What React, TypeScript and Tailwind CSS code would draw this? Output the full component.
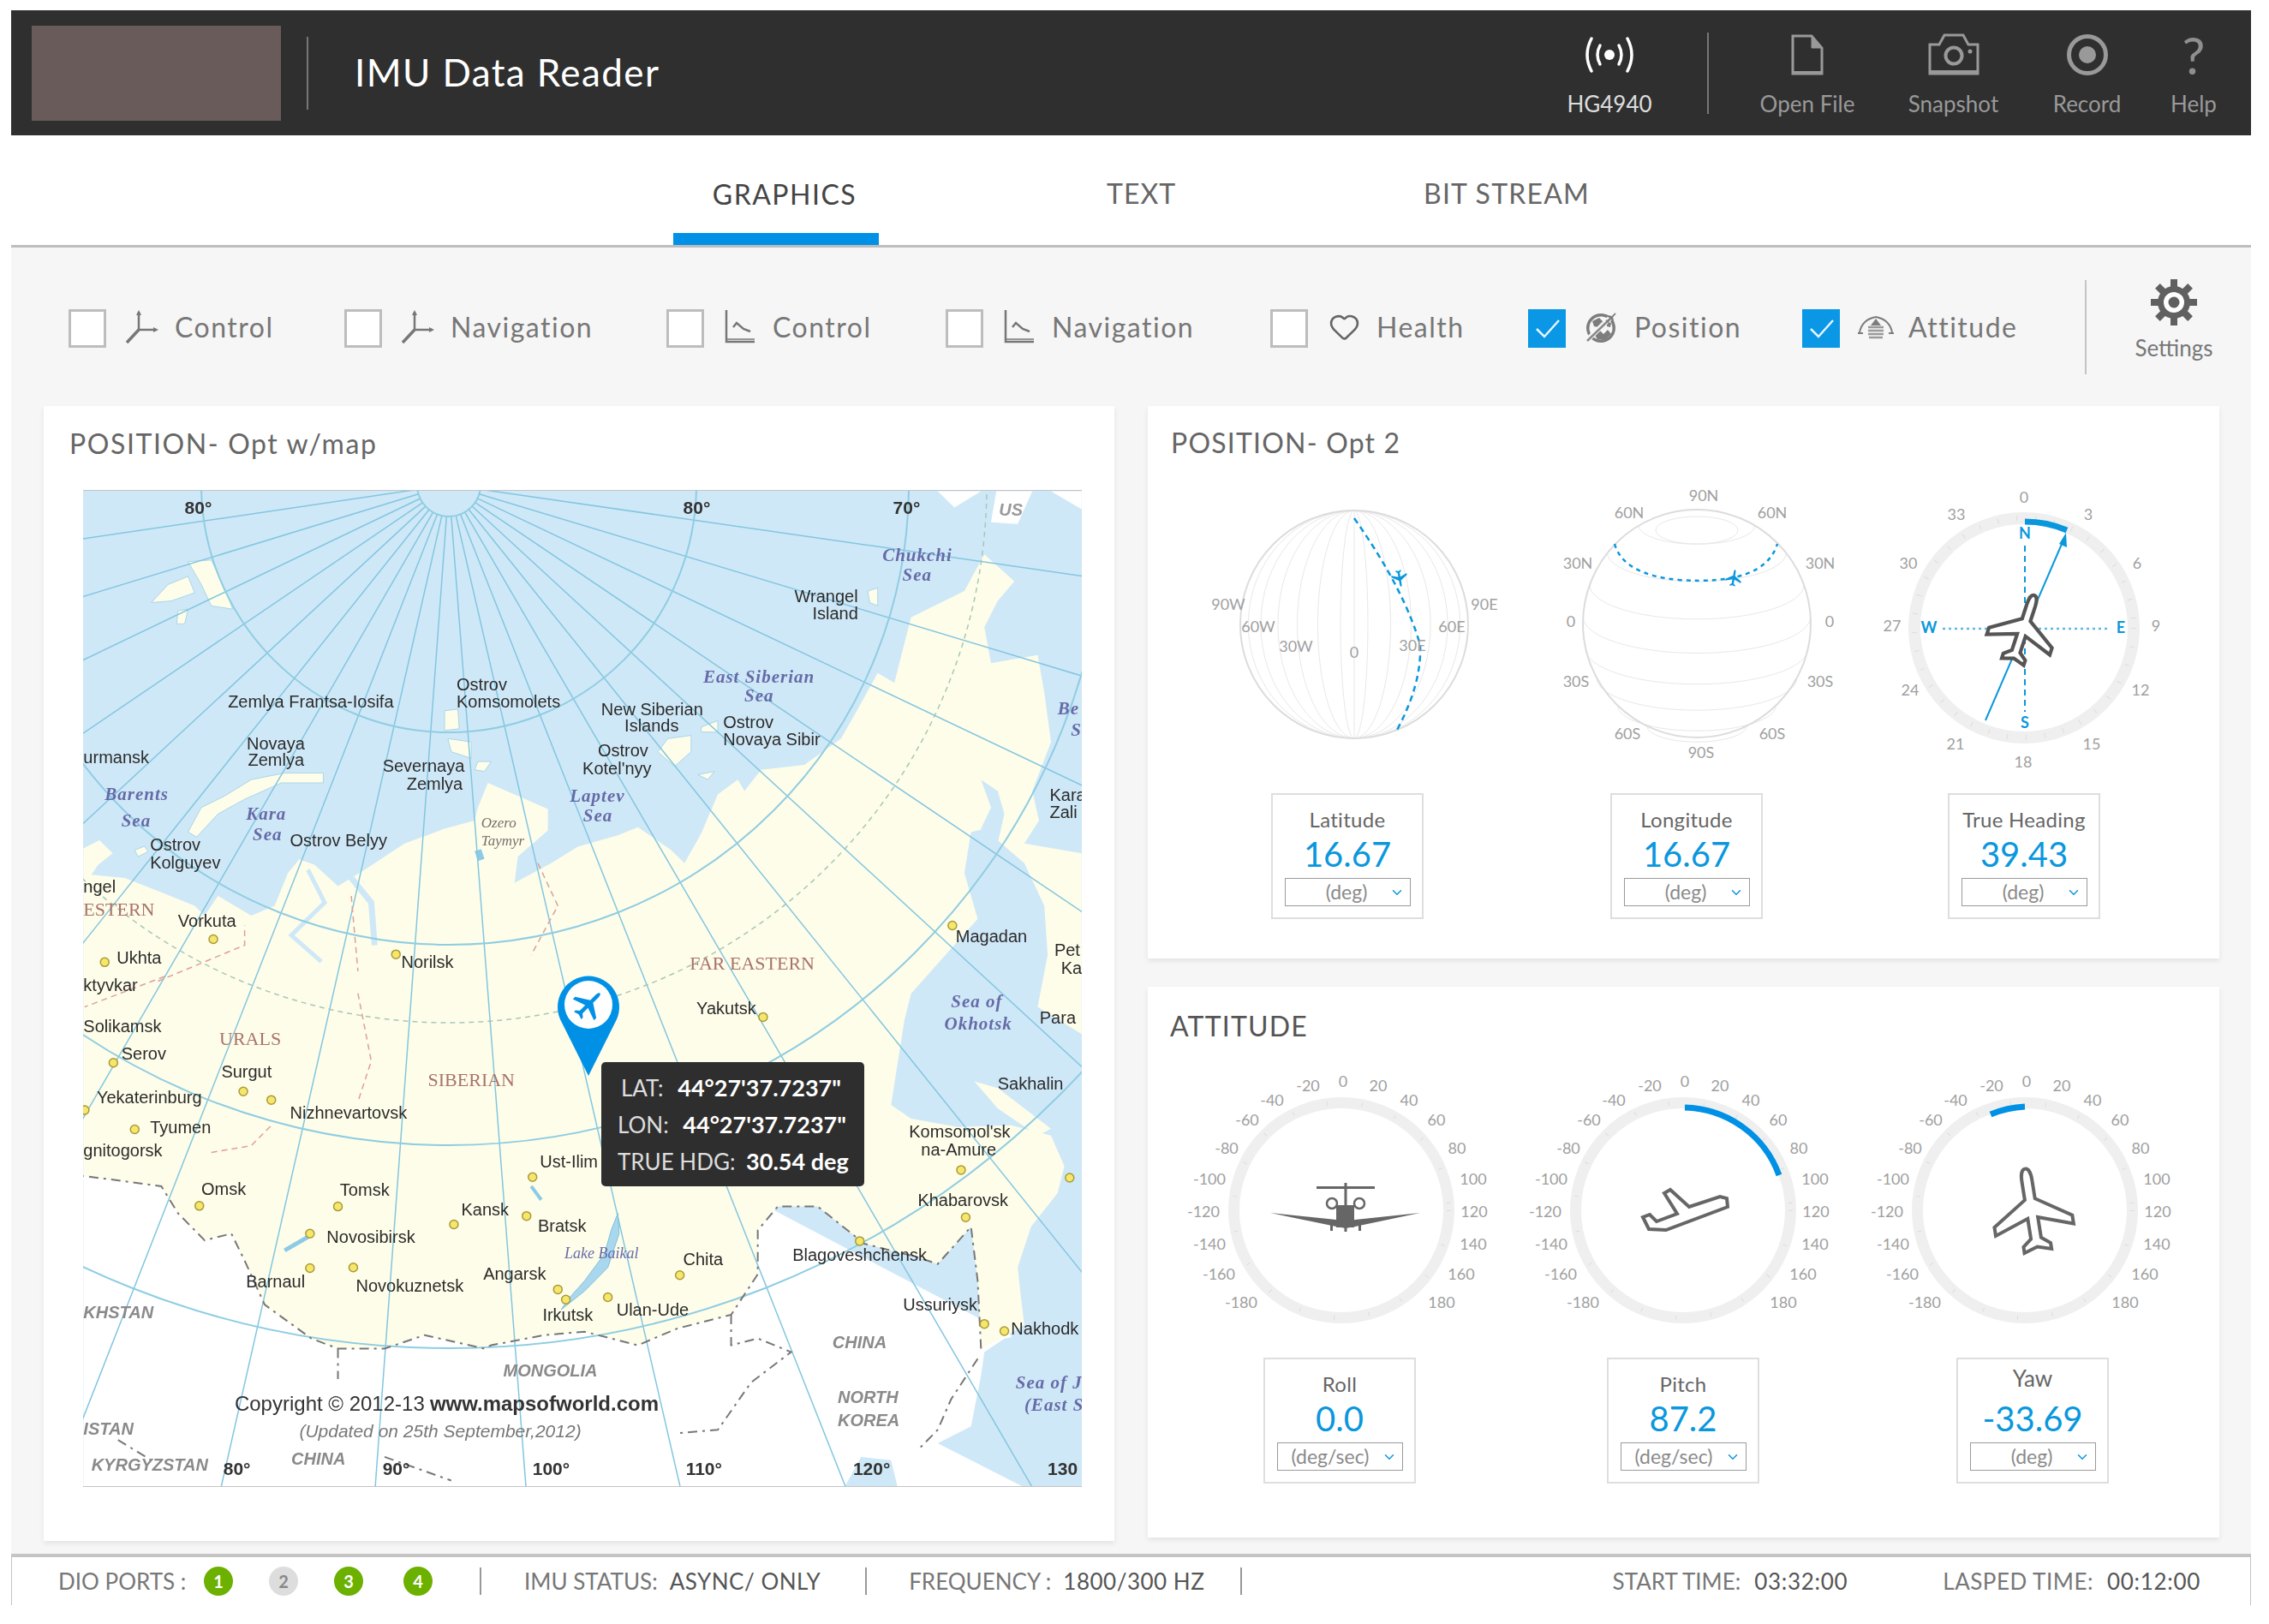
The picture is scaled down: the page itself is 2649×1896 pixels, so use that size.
import { ChevronDown, Heart } from 'lucide-react'
import type { ReactNode } from 'react'

// map reference points were read off two crops, so each set has its own scale
type Pt = [number, number]
type Label = [string, number, number]
const north = ([x, y]: Pt): Pt => [60 + x * 0.778, 560 + y * 0.3827]
const south = ([x, y]: Pt): Pt => [60 + x * 0.778, 1140 + y * 0.395]
const pts = (list: Pt[]) => list.map(([x, y]) => `${x},${y}`).join(' ')

const LAND: Pt[] = [
  ...([
    [48, 1125], [72, 1100], [92, 1140], [70, 1175], [60, 1205], [110, 1215], [160, 1255], [215, 1300], [230, 1330],
    [250, 1270], [300, 1330], [335, 1300], [355, 1200], [372, 1158], [395, 1175], [430, 1240], [470, 1190], [530, 1110],
    [590, 1065], [635, 1040], [640, 1000], [655, 925], [700, 965], [745, 1005], [745, 1070], [700, 1150], [695, 1230],
    [750, 1170], [790, 1120], [850, 1085], [880, 1060], [930, 1130], [950, 1170], [975, 1080], [1000, 960], [1030, 915],
    [1040, 950], [1065, 885], [1130, 870], [1185, 790], [1210, 700], [1240, 590], [1265, 620], [1290, 420], [1370, 340],
    [1400, 228], [1445, 310], [1420, 370], [1400, 450], [1410, 560], [1480, 535], [1490, 650], [1500, 800], [1472, 950],
    [1482, 1040], [1460, 1110], [1546, 1140], [1546, 1568],
  ] as Pt[]).map(north),
  ...([[1546, 170], [1480, 90]] as Pt[]).map(south),
  ...([
    [1495, 1450], [1490, 1300], [1460, 1170], [1400, 1065], [1380, 1075], [1370, 1200], [1390, 1340], [1290, 1568],
  ] as Pt[]).map(north),
  ...([
    [1280, 130], [1260, 380], [1290, 420], [1360, 445], [1440, 440], [1500, 470], [1520, 560], [1510, 640], [1470, 740],
    [1450, 860], [1455, 950], [1460, 1030], [1430, 1065], [1395, 1100], [1390, 900], [1380, 740], [1330, 850], [1300, 830],
    [1220, 790], [1150, 680], [1090, 680], [1060, 750], [1060, 880], [1020, 1000], [940, 1040], [880, 1090], [800, 1050],
    [740, 1060], [660, 1090], [650, 1100], [560, 1060], [500, 1100], [430, 1100], [390, 1070], [320, 970], [290, 840],
    [270, 760], [230, 780], [190, 700], [165, 620], [90, 600], [48, 590],
  ] as Pt[]).map(south),
]

const BORDER: Pt[] = ([
  [1395, 1100], [1390, 900], [1380, 740], [1330, 850], [1300, 830], [1220, 790], [1150, 680], [1090, 680], [1060, 750],
  [1060, 880], [1020, 1000], [940, 1040], [880, 1090], [800, 1050], [740, 1060], [660, 1090], [650, 1100], [560, 1060],
  [500, 1100], [430, 1100], [390, 1070], [320, 970], [290, 840], [270, 760], [230, 780], [190, 700], [165, 620], [90, 600], [48, 590],
] as Pt[]).map(south)

const ISLANDS: Pt[][] = ([
  [[150, 375], [175, 320], [205, 295], [215, 345], [180, 370]],
  [[205, 250], [240, 245], [262, 340], [272, 395], [240, 385], [225, 320]],
  [[190, 400], [205, 395], [200, 440], [188, 440]],
  [[205, 1075], [225, 1000], [260, 965], [300, 915], [350, 895], [408, 895], [408, 925], [345, 925], [290, 975], [250, 1020], [218, 1090]],
  [[590, 705], [610, 700], [612, 760], [590, 765]],
  [[595, 790], [630, 800], [630, 850], [600, 830]],
  [[640, 860], [660, 860], [650, 890], [635, 885]],
  [[925, 790], [960, 780], [960, 830], [935, 875], [910, 830]],
  [[975, 755], [1000, 735], [1000, 770], [975, 770]],
  [[970, 900], [995, 890], [985, 915]],
  [[1225, 340], [1240, 330], [1240, 385], [1228, 375]],
  [[125, 1130], [140, 1118], [145, 1135], [130, 1150]],
] as Pt[][]).map((s) => s.map(north))

const ALASKA: Pt[][] = ([
  [[1330, 35], [1355, 85], [1395, 35]],
  [[1418, 35], [1410, 130], [1450, 135], [1472, 35]],
  [[1500, 35], [1546, 90], [1546, 35]],
] as Pt[][]).map((s) => s.map(north))

const CITY_N: Pt[] = [[243, 1402], [80, 1472], [517, 1448], [1352, 1360]]
const CITY_S: Pt[] = [
  [1068, 120], [93, 255], [288, 340], [330, 365], [50, 395], [125, 452], [222, 678], [430, 680], [722, 593], [604, 733],
  [713, 708], [388, 760], [388, 862], [453, 860], [760, 925], [772, 955], [835, 948], [943, 883], [1213, 782], [1365, 572],
  [1372, 712], [1400, 1027], [1430, 1048], [1528, 595],
]

const NAMES_N: Label[] = [
  ['Zemlya Frantsa-Iosifa', 265, 680], ['Ostrov', 608, 630], ['Komsomolets', 608, 682], ['New Siberian', 825, 705],
  ['Islands', 860, 755], ['Ostrov', 1008, 745], ['Novaya Sibir', 1008, 795], ['Novaya', 293, 808], ['Zemlya', 295, 860],
  ['urmansk', 48, 852], ['Severnaya', 497, 878], ['Zemlya', 533, 932], ['Ostrov', 820, 830], ["Kotel'nyy", 797, 885],
  ['Ostrov Belyy', 358, 1105], ['Ostrov', 148, 1118], ['Kolguyev', 148, 1172], ['ngel', 48, 1245], ['Vorkuta', 190, 1350],
  ['Ukhta', 98, 1462], ['ktyvkar', 48, 1545], ['Norilsk', 525, 1475], ['Magadan', 1357, 1398], ['Pet', 1505, 1440],
  ['Ka', 1515, 1495], ['Wrangel', 1115, 360], ['Island', 1142, 412], ['Kara', 1498, 965], ['Zali', 1498, 1018],
]
const NAMES_S: Label[] = [
  ['Solikamsk', 48, 152], ['Serov', 105, 232], ['Surgut', 255, 285], ['Yekaterinburg', 68, 362], ['Nizhnevartovsk', 358, 408],
  ['Tyumen', 148, 450], ['gnitogorsk', 48, 518], ['Omsk', 225, 632], ['Tomsk', 433, 635], ['Ust-Ilim', 733, 552],
  ['Kansk', 615, 692], ['Bratsk', 730, 742], ['Novosibirsk', 413, 775], ['Chita', 948, 840], ['Barnaul', 292, 905],
  ['Novokuznetsk', 457, 918], ['Angarsk', 648, 882], ['Irkutsk', 737, 1005], ['Ulan-Ude', 848, 988],
  ['Blagoveshchensk', 1112, 828], ['Ussuriysk', 1278, 975], ['Nakhodk', 1440, 1045], ['Yakutsk', 968, 97], ['Para', 1483, 125],
  ['Sakhalin', 1420, 322], ["Komsomol'sk", 1287, 463], ['na-Amure', 1305, 517], ['Khabarovsk', 1300, 665],
]
const SEAS_N: Label[] = [
  ['Chukchi', 1247, 235], ['Sea', 1277, 297], ['East Siberian', 978, 607], ['Sea', 1040, 665], ['Barents', 80, 965],
  ['Sea', 105, 1045], ['Kara', 292, 1025], ['Sea', 302, 1087], ['Laptev', 778, 970], ['Sea', 798, 1030], ['Be', 1510, 703], ['S', 1530, 770],
]
const SEAS_S: Label[] = [['Sea of', 1350, 80], ['Okhotsk', 1340, 145], ['Sea of Ja', 1447, 1205], ['(East S', 1460, 1272]]
const REGIONS_N: Label[] = [['ESTERN', 48, 1318], ['FAR EASTERN', 958, 1482]]
const REGIONS_S: Label[] = [['URALS', 252, 190], ['SIBERIAN', 565, 312]]
const COUNTRIES: Label[] = [
  ['KHSTAN', 48, 998], ['CHINA', 1172, 1085], ['MONGOLIA', 678, 1170], ['NORTH', 1180, 1247], ['KOREA', 1180, 1315],
  ['ISTAN', 48, 1340], ['KYRGYZSTAN', 60, 1447], ['CHINA', 360, 1430],
]
const DEGREES_N: Label[] = [['80°', 200, 90], ['80°', 948, 90], ['70°', 1263, 90]]
const DEGREES_S: Label[] = [['80°', 258, 1460], ['90°', 497, 1460], ['100°', 722, 1460], ['110°', 952, 1460], ['120°', 1203, 1460], ['130', 1495, 1460]]

const PLANE =
  'M0 -50C4 -50 6 -44 6 -36L6 -14L46 12L46 22L6 8L6 32L16 40L16 47L0 42L-16 47L-16 40L-6 32L-6 8L-46 22L-46 12L-6 -14L-6 -36C-6 -44 -4 -50 0 -50Z'

function MapText({ items, at, className }: { items: Label[]; at: (p: Pt) => Pt; className: string }) {
  return (
    <g className={className}>
      {items.map(([t, x, y], i) => {
        const [px, py] = at([x, y])
        return (
          <text key={i} x={px} y={py} dominantBaseline="middle">
            {t}
          </text>
        )
      })}
    </g>
  )
}

function RussiaMap() {
  const fan = Array.from({ length: 21 }, (_, k) => ((-4.2 + 8.6 * (k - 10)) * Math.PI) / 180)
  return (
    <svg viewBox="97 573 1166 1164" className="block w-[1166px] h-[1164px] blur-[0.5px]">
      <rect x="97" y="573" width="1166" height="1164" fill="#cfe8f7" />
      <polygon points={pts(([[48, 590], [48, 1510], [1470, 1510], [1440, 1060], [900, 500]] as Pt[]).map(south))} fill="#ffffff" />
      <polygon points={pts(([[1430, 1070], [1400, 1110], [1395, 1180], [1380, 1330], [1330, 1380], [1460, 1510], [1546, 1510], [1546, 1030]] as Pt[]).map(south))} fill="#cfe8f7" />
      <polygon points={pts(([[1190, 1510], [1215, 1420], [1260, 1430], [1270, 1510]] as Pt[]).map(south))} fill="#cfe8f7" />
      <polygon points={pts(LAND)} fill="#fefde9" />
      <polygon points={pts(([[1385, 310], [1420, 330], [1460, 390], [1500, 450], [1480, 470], [1420, 390]] as Pt[]).map(south))} fill="#fefde9" />
      {ISLANDS.map((s, i) => (
        <polygon key={i} points={pts(s)} fill="#fefde9" stroke="#a9d6ea" strokeWidth="1" />
      ))}
      {ALASKA.map((s, i) => (
        <polygon key={i} points={pts(s)} fill="#ffffff" />
      ))}
      {/* inlets and lakes */}
      <polygon points={pts(([[1395, 915], [1420, 950], [1430, 1020], [1420, 1110], [1395, 1065], [1410, 1000]] as Pt[]).map(north))} fill="#cfe8f7" />
      <polyline points={pts(([[440, 1190], [480, 1290], [485, 1420]] as Pt[]).map(north))} fill="none" stroke="#cfe8f7" strokeWidth="7" />
      <polyline points={pts(([[385, 1190], [410, 1290], [360, 1390], [405, 1470]] as Pt[]).map(north))} fill="none" stroke="#cfe8f7" strokeWidth="5" />
      <polyline points={pts(([[640, 1130], [645, 1160]] as Pt[]).map(north))} fill="none" stroke="#8ccbe8" strokeWidth="8" />
      <polygon points={pts(([[850, 700], [852, 760], [835, 860], [800, 930], [765, 985], [775, 955], [800, 900], [830, 820], [840, 750]] as Pt[]).map(south))} fill="#a9d8ee" stroke="#7fbfdc" strokeWidth="1" />
      <polyline points={pts(([[350, 810], [385, 770]] as Pt[]).map(south))} fill="none" stroke="#8ccbe8" strokeWidth="5" />
      <polyline points={pts(([[720, 620], [735, 660]] as Pt[]).map(south))} fill="none" stroke="#8ccbe8" strokeWidth="4" />
      {/* graticule around the pole */}
      {fan.map((a, i) => (
        <line key={i} x1={524 + 37 * Math.sin(a)} y1={566 + 37 * Math.cos(a)} x2={524 + 2000 * Math.sin(a)} y2={566 + 2000 * Math.cos(a)} stroke="#82c6e0" strokeWidth="1.5" />
      ))}
      {[37, 289, 537, 771, 1008].map((r) => (
        <circle key={r} cx="524" cy="566" r={r} fill="none" stroke="#8fcde2" strokeWidth="2" />
      ))}
      <circle cx="524" cy="566" r="628" fill="none" stroke="#a7c7b8" strokeWidth="1.5" strokeDasharray="6 5" />
      {/* borders */}
      <polyline points={pts(BORDER)} fill="none" stroke="#777777" strokeWidth="2" strokeDasharray="11 6 3 6" />
      {([
        [[430, 1100], [430, 1190]],
        [[1020, 1000], [1020, 1090], [1060, 1070], [1110, 1110], [1050, 1200], [1000, 1340], [940, 1350]],
        [[1390, 1130], [1350, 1250], [1330, 1340], [1300, 1400]],
        [[100, 1370], [150, 1430]],
        [[500, 1420], [600, 1490]],
      ] as Pt[][]).map((s, i) => (
        <polyline key={i} points={pts(s.map(south))} fill="none" stroke="#777777" strokeWidth="2" strokeDasharray="11 6 3 6" />
      ))}
      {([
        [[460, 50], [480, 250], [460, 370]],
        [[240, 520], [300, 500], [330, 440]],
        [[170, 0], [50, 90]],
      ] as Pt[][]).map((s, i) => (
        <polyline key={i} points={pts(s.map(south))} fill="none" stroke="#dd9f98" strokeWidth="1.5" strokeDasharray="7 5" />
      ))}
      {([
        [[450, 1270], [460, 1500]],
        [[730, 1170], [760, 1300], [720, 1450]],
        [[160, 1530], [290, 1420], [290, 1360]],
      ] as Pt[][]).map((s, i) => (
        <polyline key={i} points={pts(s.map(north))} fill="none" stroke="#dd9f98" strokeWidth="1.5" strokeDasharray="7 5" />
      ))}
      {[...CITY_N.map(north), ...CITY_S.map(south)].map(([x, y], i) => (
        <circle key={i} cx={x} cy={y} r="5" fill="#f6e66b" stroke="#a89a3a" strokeWidth="1.5" />
      ))}
      <MapText items={NAMES_N} at={north} className="font-['Liberation_Sans',sans-serif] text-[20px] fill-[#2b2b2b]" />
      <MapText items={NAMES_S} at={south} className="font-['Liberation_Sans',sans-serif] text-[20px] fill-[#2b2b2b]" />
      <MapText items={SEAS_N} at={north} className="font-['Liberation_Serif',serif] italic font-bold text-[21px] tracking-[1px] fill-[#666aa8]" />
      <MapText items={SEAS_S} at={south} className="font-['Liberation_Serif',serif] italic font-bold text-[21px] tracking-[1px] fill-[#666aa8]" />
      <MapText items={REGIONS_N} at={north} className="font-['Liberation_Serif',serif] text-[22px] fill-[#a9736a]" />
      <MapText items={REGIONS_S} at={south} className="font-['Liberation_Serif',serif] text-[22px] fill-[#a9736a]" />
      <MapText items={COUNTRIES} at={south} className="font-['Liberation_Sans',sans-serif] italic font-bold text-[20px] fill-[#8a8a8a]" />
      <MapText items={DEGREES_N} at={north} className="font-['Liberation_Sans',sans-serif] font-bold text-[21px] fill-[#333333]" />
      <MapText items={DEGREES_S} at={south} className="font-['Liberation_Sans',sans-serif] font-bold text-[21px] fill-[#333333]" />
      <MapText items={[['Ozero', 645, 1050], ['Taymyr', 645, 1105]]} at={north} className="font-['Liberation_Serif',serif] italic text-[17px] fill-[#77706a]" />
      <MapText items={[['US', 1422, 95]]} at={north} className="font-['Liberation_Sans',sans-serif] italic font-bold text-[20px] fill-[#999999]" />
      <MapText items={[['Lake Baikal', 770, 822]]} at={south} className="font-['Liberation_Serif',serif] italic text-[18px] fill-[#666aa8]" />
      <MapText items={[['Copyright © 2012-13', 275, 1268]]} at={south} className="font-['Liberation_Sans',sans-serif] text-[24px] fill-[#333333]" />
      <MapText items={[['www.mapsofworld.com', 568, 1268]]} at={south} className="font-['Liberation_Sans',sans-serif] font-bold text-[24px] fill-[#333333]" />
      <MapText items={[['(Updated on 25th September,2012)', 372, 1348]]} at={south} className="font-['Liberation_Sans',sans-serif] italic text-[21px] fill-[#777777]" />
      {/* location pin */}
      <path d="M687 1256L654 1190A36 36 0 1 1 720 1190Z" fill="#0091e6" />
      <circle cx="687" cy="1173" r="28" fill="#ffffff" />
      <path d={PLANE} fill="#0091e6" transform="translate(687 1173) rotate(45) scale(0.38)" />
    </svg>
  )
}

function Readout({ label, value, unit, pad = 'pt-[16px]', labelClass = 'text-[24px] tracking-[0.3px] text-[#666]', left = false }: { label: string; value: string; unit: string; pad?: string; labelClass?: string; left?: boolean }) {
  return (
    <div className={`w-[178px] h-[147px] shrink-0 border-2 border-[#dedede] flex flex-col items-center ${pad}`}>
      <div className={`h-[26px] leading-[26px] whitespace-nowrap ${labelClass}`}>{label}</div>
      <div className="mt-[7px] h-[40px] leading-[40px] text-[40px] text-[#0a97dd] whitespace-nowrap">{value}</div>
      <div className="mt-[8px] w-[147px] h-[33px] border border-[#9a9a9a] flex items-center text-[23px] text-[#8a8a8a]">
        <span className={left ? 'flex-1 text-center pl-[2px] whitespace-nowrap' : 'flex-1 text-center pl-[22px]'}>{unit}</span>
        <ChevronDown className="w-[18px] h-[18px] mr-[6px] text-[#0a97dd]" strokeWidth={2} />
      </div>
    </div>
  )
}

function ScaleText({ items }: { items: [string, number, number][] }) {
  return (
    <g className="text-[18px] fill-[#a0a0a0]">
      {items.map(([t, x, y], i) => (
        <text key={i} x={x} y={y} textAnchor="middle" dominantBaseline="middle">
          {t}
        </text>
      ))}
    </g>
  )
}

function LatitudeGlobe() {
  return (
    <svg viewBox="1420 570 330 335" className="w-[330px] h-[335px] shrink-0 overflow-visible">
      {[0.12, 0.32, 0.5, 0.67, 0.82, 0.93].map((k) => (
        <ellipse key={k} cx="1581" cy="730" rx={133 * k} ry="133" fill="none" stroke="#e8e8e8" strokeWidth="1" />
      ))}
      <line x1="1581" y1="597" x2="1581" y2="863" stroke="#e8e8e8" />
      <circle cx="1581" cy="730" r="133" fill="none" stroke="#dcdcdc" strokeWidth="2" />
      <path d="M1581 606Q1640 690 1658 754Q1660 800 1630 855" fill="none" stroke="#0a97dd" strokeWidth="2.5" strokeDasharray="7 5" />
      <path d={PLANE} fill="#0a97dd" transform="translate(1634 676) rotate(170) scale(0.2)" />
      <ScaleText items={[['90W', 1434, 708], ['60W', 1469, 734], ['30W', 1513, 757], ['0', 1581, 764], ['30E', 1649, 756], ['60E', 1695, 734], ['90E', 1733, 708]]} />
    </svg>
  )
}

function LongitudeGlobe() {
  const bands = [0.86, 0.62, 0.34, 0.06, -0.22, -0.48, -0.72, -0.9]
  return (
    <svg viewBox="1820 570 330 335" className="w-[330px] h-[335px] shrink-0 overflow-visible">
      <ellipse cx="1981" cy="620" rx="48" ry="16" fill="none" stroke="#e8e8e8" />
      {bands.map((k) => {
        const rx = 133 * Math.sqrt(1 - k * k)
        const y = 729 - 133 * k
        return <path key={k} d={`M${1981 - rx} ${y}A${rx} ${rx * 0.32} 0 0 0 ${1981 + rx} ${y}`} fill="none" stroke="#e8e8e8" />
      })}
      <circle cx="1981" cy="729" r="133" fill="none" stroke="#dcdcdc" strokeWidth="2" />
      <path d="M1885 636Q1895 672 1960 678Q2060 685 2075 636" fill="none" stroke="#0a97dd" strokeWidth="2.5" strokeDasharray="5 5" />
      <path d={PLANE} fill="#0a97dd" transform="translate(2024 676) rotate(10) scale(0.2)" />
      <ScaleText items={[['90N', 1989, 581], ['60N', 1902, 601], ['60N', 2069, 601], ['30N', 1842, 660], ['30N', 2125, 660], ['0', 1834, 728], ['0', 2136, 728], ['30S', 1840, 798], ['30S', 2125, 798], ['60S', 1900, 859], ['60S', 2069, 859], ['90S', 1986, 881]]} />
    </svg>
  )
}

function Compass() {
  return (
    <svg viewBox="2200 570 330 335" className="w-[330px] h-[335px] shrink-0 overflow-visible">
      <circle cx="2363" cy="734" r="128" fill="none" stroke="#efefef" strokeWidth="14" />
      <circle cx="2363" cy="734" r="128" fill="none" stroke="#dddddd" strokeWidth="6" strokeDasharray="1 21" />
      <path d="M2364 610A124 124 0 0 1 2413 620" fill="none" stroke="#0a97dd" strokeWidth="7" />
      <line x1="2364" y1="638" x2="2364" y2="832" stroke="#0a97dd" strokeWidth="2" strokeDasharray="7 5" />
      <line x1="2268" y1="735" x2="2464" y2="735" stroke="#5fb8e4" strokeWidth="2.5" strokeDasharray="3 4" />
      <line x1="2318" y1="842" x2="2411" y2="627" stroke="#0a97dd" strokeWidth="2" />
      <path d="M2412 623L2413 640L2404 636Z" fill="#0a97dd" />
      <path d={PLANE} fill="#ffffff" stroke="#555555" strokeWidth="5" transform="translate(2362 736) rotate(18) scale(0.84)" />
      <ScaleText items={[['0', 2363, 583], ['3', 2438, 603], ['6', 2495, 660], ['9', 2517, 733], ['12', 2499, 808], ['15', 2442, 871], ['18', 2362, 892], ['21', 2283, 871], ['24', 2230, 808], ['27', 2209, 733], ['30', 2228, 660], ['33', 2284, 603]]} />
      <g className="text-[18px] font-bold fill-[#0a97dd]">
        <text x="2364" y="625" textAnchor="middle" dominantBaseline="middle">N</text>
        <text x="2364" y="846" textAnchor="middle" dominantBaseline="middle">S</text>
        <text x="2252" y="735" textAnchor="middle" dominantBaseline="middle">W</text>
        <text x="2476" y="735" textAnchor="middle" dominantBaseline="middle">E</text>
      </g>
    </svg>
  )
}

// x offsets are from the zero mark, y from the ring centre
const GAUGE_MARKS: [string, number, number][] = [
  ['0', 0, -149], ['20', 41, -144], ['40', 77, -127], ['60', 109, -104], ['80', 133, -71], ['100', 152, -35], ['120', 153, 3],
  ['140', 152, 41], ['160', 138, 76], ['180', 115, 109], ['-20', -41, -144], ['-40', -83, -127], ['-60', -112, -104], ['-80', -136, -71],
  ['-100', -156, -35], ['-120', -163, 3], ['-140', -156, 41], ['-160', -145, 76], ['-180', -119, 109],
]

function Gauge({ cx, left, children }: { cx: number; left: number; children: ReactNode }) {
  return (
    <svg viewBox={`${left} 1250 340 320`} className="w-[340px] h-[320px] shrink-0 overflow-visible">
      <circle cx={cx} cy="1413" r="125.5" fill="none" stroke="#efefef" strokeWidth="13" />
      <circle cx={cx} cy="1413" r="125.5" fill="none" stroke="#dddddd" strokeWidth="5" strokeDasharray="1 40" />
      <ScaleText items={GAUGE_MARKS.map(([t, x, y]) => [t, cx + 2 + x, 1413 + y])} />
      {children}
    </svg>
  )
}

function RollPlane() {
  return (
    <g fill="#666666">
      <path d="M1483 1416L1560 1424L1571 1428L1582 1424L1658 1416L1582 1432L1571 1434L1560 1432Z" />
      <rect x="1560" y="1407" width="21" height="26" />
      <rect x="1569.5" y="1381" width="3" height="57" />
      <path d="M1537 1385L1605 1385L1605 1388L1537 1388Z" />
      <circle cx="1555" cy="1405" r="6" fill="none" stroke="#666666" strokeWidth="2.5" />
      <circle cx="1587" cy="1405" r="6" fill="none" stroke="#666666" strokeWidth="2.5" />
      <rect x="1553" y="1426" width="3" height="11" />
      <rect x="1586" y="1426" width="3" height="11" />
    </g>
  )
}

function AxisIcon() {
  return (
    <svg viewBox="0 0 38 40" className="w-[38px] h-[40px]" fill="none" stroke="#777777" strokeWidth="2.5">
      <path d="M15 2V23H35" />
      <path d="M15 23L1 38" strokeWidth="3.5" />
      <path d="M15 0L12 6H18ZM38 23L32 20V26Z" fill="#777777" stroke="none" />
    </svg>
  )
}

function ChartIcon() {
  return (
    <svg viewBox="0 0 36 42" className="w-[36px] h-[42px]" fill="none" stroke="#777777" strokeWidth="2.5">
      <path d="M2 1V38H35" />
      <path d="M2 35H35" strokeWidth="1.5" />
      <path d="M10 21L14 16L22 23L30 26" />
    </svg>
  )
}

function PositionIcon() {
  return (
    <svg viewBox="0 0 40 38" className="w-[40px] h-[38px]">
      <circle cx="19" cy="20" r="17" fill="#7d7d7d" />
      <circle cx="19" cy="20" r="13.5" fill="#f6f6f6" />
      <path d="M9 12L17 8L22 13L16 19L11 18ZM11 27L18 23L22 27L27 22L31 27L24 34L15 33ZM26 13L31 14L30 19L26 18Z" fill="#7d7d7d" />
      <path d="M1 36L31 7" stroke="#f6f6f6" strokeWidth="6" />
      <path d="M3 35L30 9" stroke="#8a8a8a" strokeWidth="2.5" />
      <path d={PLANE} fill="#7d7d7d" transform="translate(31 8) rotate(45) scale(0.15)" />
    </svg>
  )
}

function AttitudeIcon() {
  return (
    <svg viewBox="0 0 42 32" className="w-[42px] h-[32px]" fill="none" stroke="#7d7d7d" strokeWidth="2">
      <path d="M2 22Q5 7 21 4Q37 7 40 22" />
      <path d="M0 23H6M36 23H42" />
      <path d="M21 6L15 14H27Z" fill="#7d7d7d" stroke="none" />
      <path d="M12 16H30M12 20H30M12 24H30M13 28H29" strokeWidth="2.5" stroke="#9a9a9a" />
    </svg>
  )
}

function Gear() {
  return (
    <svg viewBox="-28 -28 56 56" className="w-[56px] h-[56px]">
      {[0, 45, 90, 135, 180, 225, 270, 315].map((a) => (
        <rect key={a} x="-4" y="-27" width="8" height="12" fill="#606060" transform={`rotate(${a})`} />
      ))}
      <circle r="19" fill="#606060" />
      <circle r="12" fill="#ffffff" />
      <circle r="6.5" fill="#606060" />
    </svg>
  )
}

const TOOLS = [
  { w: 'w-[322px]', icon: <AxisIcon />, label: 'Control', on: false },
  { w: 'w-[376px]', icon: <AxisIcon />, label: 'Navigation', on: false },
  { w: 'w-[326px]', icon: <ChartIcon />, label: 'Control', on: false },
  { w: 'w-[379px]', icon: <ChartIcon />, label: 'Navigation', on: false },
  { w: 'w-[301px]', icon: <Heart className="w-[37px] h-[37px] text-[#666]" strokeWidth={1.7} />, label: 'Health', on: false },
  { w: 'w-[320px]', icon: <PositionIcon />, label: 'Position', on: true },
  { w: 'w-[330px]', icon: <AttitudeIcon />, label: 'Attitude', on: true },
]

function Tool({ w, icon, label, on }: { w: string; icon: ReactNode; label: string; on: boolean }) {
  return (
    <div className={`${w} flex items-center shrink-0`}>
      {on ? (
        <svg viewBox="0 0 44 45" className="w-[44px] h-[45px] mt-[4px] bg-[#0a97e6]" fill="none" stroke="#e8f5fd" strokeWidth="2.5">
          <path d="M10 23L19 32L36 13" />
        </svg>
      ) : (
        <div className="w-[44px] h-[45px] mt-[4px] bg-white border-[3px] border-[#bdbdbd]" />
      )}
      <div className="w-[66px] flex justify-center pl-[18px]">{icon}</div>
      <span className="ml-[14px] text-[32px] text-[#777] tracking-[1.5px]">{label}</span>
    </div>
  )
}

function HeaderAction({ w, label, light, children }: { w: string; label: string; light?: boolean; children: ReactNode }) {
  return (
    <div className={`${w} shrink-0 flex flex-col items-center`}>
      <div className="h-[62px] flex items-center justify-center">{children}</div>
      <span className={`mt-[10px] leading-[32px] text-[26px] whitespace-nowrap ${light ? 'text-[#dddddd]' : 'text-[#999999]'}`}>{label}</span>
    </div>
  )
}

function Port({ n, on }: { n: number; on: boolean }) {
  return (
    <div className={`w-[34px] h-[34px] rounded-full flex items-center justify-center text-[20px] font-bold ${on ? 'bg-[#6cb000] text-white' : 'bg-[#dddddd] text-[#888888]'}`}>
      {n}
    </div>
  )
}

export default function App() {
  return (
    <div className="w-[2649px] h-[1896px] bg-white pt-[12px] pl-[13px] pr-[21px] font-['Lato',sans-serif] overflow-hidden">
      <header className="h-[146px] bg-[#2f2f2f] flex items-center pl-[24px] pr-[39px]">
        <div className="w-[291px] h-[111px] bg-[#685b5a]" />
        <div className="ml-[30px] w-[2px] h-[85px] bg-[#777777]" />
        <h1 className="ml-[54px] pb-[3px] text-[44px] text-white tracking-[1.4px]">IMU Data Reader</h1>
        <div className="ml-auto flex items-center">
          <HeaderAction w="w-[102px]" label="HG4940" light>
            <svg viewBox="0 0 60 42" className="w-[60px] h-[42px]" fill="none" stroke="#ffffff" strokeWidth="3.5" strokeLinecap="round">
              <circle cx="30" cy="21" r="6" fill="#ffffff" stroke="none" />
              <path d="M19 10Q13 21 19 32M41 10Q47 21 41 32" />
              <path d="M9 2Q-1 21 9 40M51 2Q61 21 51 40" />
            </svg>
          </HeaderAction>
          <div className="ml-[63px] w-[2px] h-[95px] bg-[#777777]" />
          <HeaderAction w="w-[114px] ml-[58px]" label="Open File">
            <svg viewBox="0 0 38 48" className="w-[38px] h-[48px]" fill="none" stroke="#999999" strokeWidth="3">
              <path d="M2 2H24L36 16V46H2Z" />
              <path d="M24 2V16H36Z" fill="#999999" strokeWidth="1" />
              <path d="M2 45H36" strokeWidth="4" />
            </svg>
          </HeaderAction>
          <HeaderAction w="w-[117px] ml-[55px]" label="Snapshot">
            <svg viewBox="0 0 60 50" className="w-[60px] h-[50px]" fill="none" stroke="#999999" strokeWidth="3">
              <path d="M2 13H13L19 2H41L47 13H58V47H2Z" />
              <path d="M2 45H58" strokeWidth="4" />
              <circle cx="30" cy="26" r="9.5" strokeWidth="4" />
              <circle cx="49" cy="21" r="2.5" fill="#999999" stroke="none" />
            </svg>
          </HeaderAction>
          <HeaderAction w="w-[83px] ml-[56px]" label="Record">
            <svg viewBox="0 0 48 48" className="w-[48px] h-[48px]" fill="none">
              <circle cx="24" cy="24" r="21.5" stroke="#999999" strokeWidth="5" />
              <circle cx="24" cy="24" r="10" fill="#999999" />
            </svg>
          </HeaderAction>
          <HeaderAction w="w-[56px] ml-[55px]" label="Help">
            <span className="text-[60px] leading-[60px] text-[#8f8f8f]">?</span>
          </HeaderAction>
        </div>
      </header>

      <nav className="h-[131px] border-b-[3px] border-[#bdbdbd] flex pl-[773px]">
        <div className="w-[240px] h-full border-b-[14px] border-[#0091e6] flex justify-center pl-[20px] pt-[49px] text-[32px] leading-[40px] tracking-[1.5px] text-[#444444]">GRAPHICS</div>
        <div className="ml-[266px] pt-[48px] text-[32px] leading-[40px] tracking-[1px] text-[#666666]">TEXT</div>
        <div className="ml-[289px] pt-[48px] text-[32px] leading-[40px] tracking-[1.2px] text-[#666666]">BIT STREAM</div>
      </nav>

      <main className="h-[1525px] bg-[#f6f6f6]">
        <div className="h-[185px] flex items-center pl-[67px]">
          {TOOLS.map((t, i) => (
            <Tool key={i} {...t} />
          ))}
          <div className="w-[2px] h-[110px] bg-[#c4c4c4] shrink-0" />
          <div className="flex-1 flex flex-col items-center pl-[12px] pb-[12px]">
            <Gear />
            <span className="mt-[6px] text-[26px] text-[#777777]">Settings</span>
          </div>
        </div>
        <div className="flex pl-[38px] gap-[39px]">
          <section className="w-[1250px] h-[1325px] bg-white shadow-[0_3px_6px_rgba(0,0,0,0.08)] pt-[24px]">
            <h2 className="pl-[30px] h-[40px] leading-[40px] text-[32px] text-[#666666] tracking-[1.6px]">POSITION- Opt w/map</h2>
            <div className="relative ml-[46px] mt-[34px] w-[1166px] h-[1164px] overflow-hidden border-y border-[#c4c4c4]">
              <RussiaMap />
              <div className="absolute left-[605px] top-[667px] w-[307px] h-[145px] rounded-[5px] bg-[#2e2e2e] flex flex-col justify-center gap-[7px] text-[26px] leading-[35px] text-[#dddddd] whitespace-nowrap">
                <div className="pl-[23px]">LAT: <b className="ml-[10px] text-[27px] font-bold text-white">44°27'37.7237"</b></div>
                <div className="pl-[19px]">LON: <b className="ml-[10px] text-[27px] font-bold text-white">44°27'37.7237"</b></div>
                <div className="pl-[19px]">TRUE HDG: <b className="ml-[6px] text-[27px] font-bold text-white">30.54 deg</b></div>
              </div>
            </div>
          </section>
          <div className="w-[1251px] flex flex-col gap-[33px]">
            <section className="h-[645px] bg-white shadow-[0_3px_6px_rgba(0,0,0,0.08)] pt-[23px]">
              <h2 className="pl-[27px] h-[40px] leading-[40px] text-[32px] text-[#666666] tracking-[1.2px]">POSITION- Opt 2</h2>
              <div className="mt-[32px] pl-[80px] flex">
                <LatitudeGlobe />
                <div className="ml-[70px]"><LongitudeGlobe /></div>
                <div className="ml-[50px]"><Compass /></div>
              </div>
              <div className="mt-[22px] pl-[144px] flex">
                <Readout label="Latitude" value="16.67" unit="(deg)" />
                <div className="ml-[218px]"><Readout label="Longitude" value="16.67" unit="(deg)" /></div>
                <div className="ml-[216px]"><Readout label="True Heading" value="39.43" unit="(deg)" /></div>
              </div>
            </section>
            <section className="h-[643px] bg-white shadow-[0_3px_6px_rgba(0,0,0,0.08)] pt-[26px]">
              <h2 className="pl-[26px] h-[40px] leading-[40px] text-[32px] text-[#555555] tracking-[1.2px]">ATTITUDE</h2>
              <div className="mt-[32px] pl-[55px] flex gap-[60px]">
                <Gauge cx={1566} left={1395}>
                  <RollPlane />
                </Gauge>
                <Gauge cx={1965} left={1795}>
                  <path d="M1967 1293A120 120 0 0 1 2077 1372" fill="none" stroke="#0091e6" strokeWidth="7" />
                  <path d="M2016 1399L2017 1409L1945 1436L1925 1435L1918 1421L1926 1418L1934 1426L1958 1417L1943 1393L1950 1389L1972 1409L2008 1397Z" fill="#ffffff" stroke="#666666" strokeWidth="4" />
                </Gauge>
                <Gauge cx={2364} left={2195}>
                  <path d="M2364 1292A120 120 0 0 0 2324 1301" fill="none" stroke="#0091e6" strokeWidth="7" />
                  <path d={PLANE} fill="#ffffff" stroke="#666666" strokeWidth="4" transform="translate(2372 1414) rotate(-9) scale(1)" />
                </Gauge>
              </div>
              <div className="mt-[15px] pl-[135px] flex">
                <Readout label="Roll" value="0.0" unit="(deg/sec)" left />
                <div className="ml-[223px]"><Readout label="Pitch" value="87.2" unit="(deg/sec)" left /></div>
                <div className="ml-[230px]"><Readout label="Yaw" value="-33.69" unit="(deg)" pad="pt-[9px]" labelClass="text-[26px] text-[#666] mb-[7px]" /></div>
              </div>
            </section>
          </div>
        </div>
      </main>

      <footer className="h-[60px] border-t-[4px] border-x border-[#c4c4c4] bg-white flex items-center pl-[54px] text-[26px] text-[#777777] whitespace-nowrap">
        <span className="w-[170px]">DIO PORTS :</span>
        <div className="w-[34px]"><Port n={1} on /></div>
        <div className="ml-[42px] w-[34px]"><Port n={2} on={false} /></div>
        <div className="ml-[42px] w-[34px]"><Port n={3} on /></div>
        <div className="ml-[47px] w-[34px]"><Port n={4} on /></div>
        <div className="ml-[55px] w-[2px] h-[32px] bg-[#999999]" />
        <span className="ml-[50px]">IMU STATUS:</span>
        <span className="ml-[14px] tracking-[0.5px] text-[#555555]">ASYNC/ ONLY</span>
        <div className="ml-[52px] w-[2px] h-[32px] bg-[#999999]" />
        <span className="ml-[49px]">FREQUENCY :</span>
        <span className="ml-[14px] tracking-[0.5px] text-[#555555]">1800/300 HZ</span>
        <div className="ml-[42px] w-[2px] h-[32px] bg-[#999999]" />
        <span className="ml-auto">START TIME:</span>
        <span className="ml-[16px] tracking-[0.7px] text-[#555555]">03:32:00</span>
        <span className="ml-[111px] tracking-[0.5px]">LASPED TIME:</span>
        <span className="ml-[16px] tracking-[0.7px] text-[#555555] mr-[58px]">00:12:00</span>
      </footer>
    </div>
  )
}
